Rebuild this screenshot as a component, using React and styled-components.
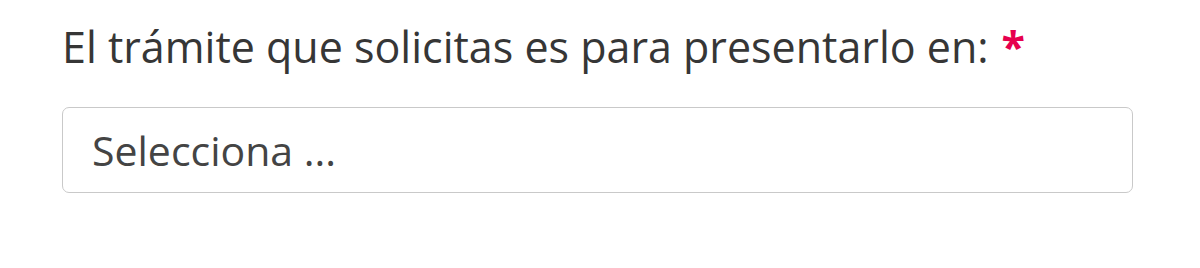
import React from "react";
import styled, { createGlobalStyle } from "styled-components";

const Global = createGlobalStyle`
  body {
    margin: 0;
    background: #fff;
    font-family: "Open Sans", "Liberation Sans", sans-serif;
  }
`;

const Field = styled.div`
  padding: 21px 67px 0 62px;
`;

const Label = styled.label`
  display: block;
  font-size: 43px;
  line-height: 52px;
  color: #363636;
  margin-bottom: 34px;
`;

const Required = styled.span`
  color: #e6004e;
  font-weight: 700;
  margin-left: 13px;
`;

const Select = styled.div`
  box-sizing: border-box;
  height: 86px;
  border: 1.5px solid #c9c9c9;
  border-radius: 7px;
  display: flex;
  align-items: center;
  padding: 0 29px;
  font-size: 41px;
  color: #444;
`;

export default function App() {
  return (
    <>
      <Global />
      <Field>
        <Label>
          El trámite que solicitas es para presentarlo en:
          <Required>*</Required>
        </Label>
        <Select>Selecciona ...</Select>
      </Field>
    </>
  );
}
